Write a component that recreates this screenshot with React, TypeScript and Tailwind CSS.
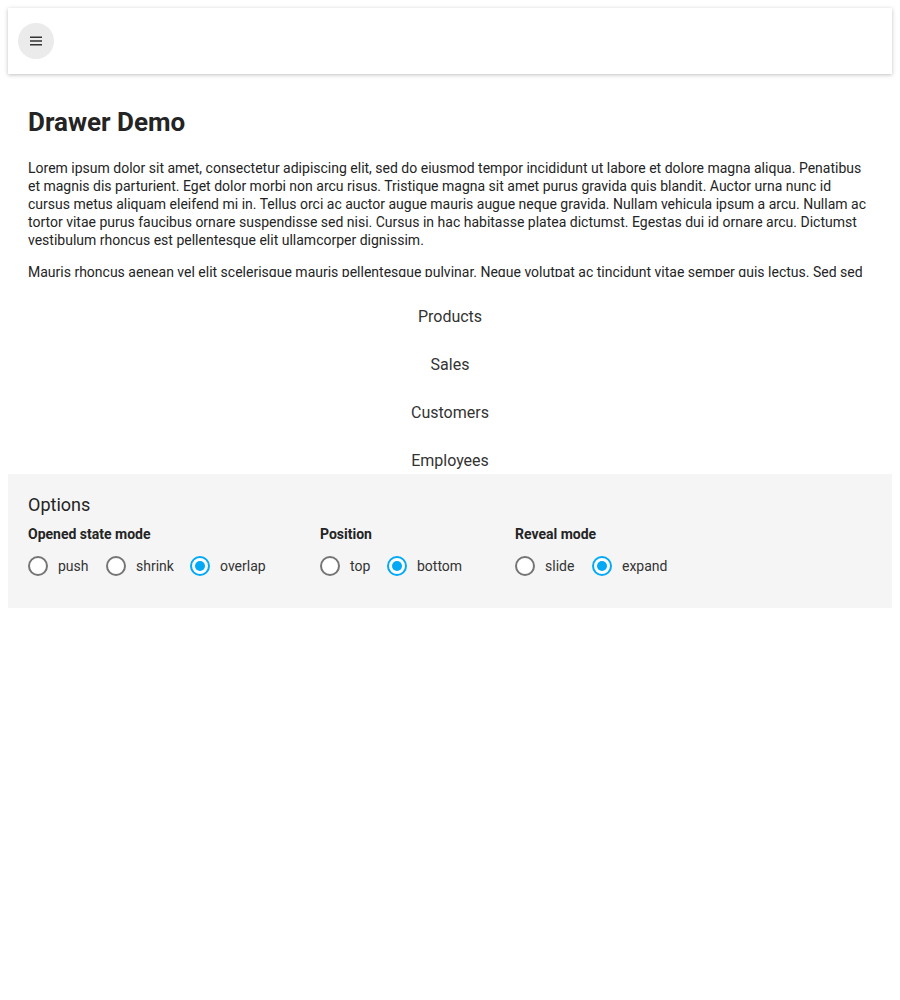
import React from "react";

function Radio({ label, checked, className = "" }: { label: string; checked?: boolean; className?: string }) {
  return (
    <div className={"flex items-center " + className}>
      <div
        className={
          "w-[20px] h-[20px] rounded-full border-2 bg-white flex items-center justify-center " +
          (checked ? "border-[#03a9f4]" : "border-[#757575]")
        }
      >
        {checked && <div className="w-[10px] h-[10px] rounded-full bg-[#03a9f4]" />}
      </div>
      <span className="ml-[10px] text-[14px] leading-[18px] text-[#333]">{label}</span>
    </div>
  );
}

export default function App() {
  return (
    <div className="m-[8px] font-['Roboto',sans-serif] text-[#333]">
      <div className="h-[66px] bg-white shadow-[0_1px_4px_rgba(0,0,0,0.25)] flex items-center px-[10px] relative z-10">
        <div className="w-[36px] h-[36px] rounded-full bg-[#ebebeb] flex items-center justify-center">
          <svg width="18" height="18" viewBox="0 0 24 24">
            <path d="M4 7h16M4 12h16M4 17h16" stroke="#333" strokeWidth="2" fill="none" />
          </svg>
        </div>
      </div>
      <div className="h-[203px] overflow-hidden px-[20px] pt-[32px]">
        <h2 className="text-[26px] leading-[32px] font-bold text-[#242424] mb-[21px]">Drawer Demo</h2>
        <p className="text-[14px] leading-[18px] text-[#242424] mb-[14px]">
          Lorem ipsum dolor sit amet, consectetur adipiscing elit, sed do eiusmod tempor incididunt ut labore et dolore magna aliqua. Penatibus et magnis dis parturient. Eget dolor morbi non arcu risus. Tristique magna sit amet purus gravida quis blandit. Auctor urna nunc id cursus metus aliquam eleifend mi in. Tellus orci ac auctor augue mauris augue neque gravida. Nullam vehicula ipsum a arcu. Nullam ac tortor vitae purus faucibus ornare suspendisse sed nisi. Cursus in hac habitasse platea dictumst. Egestas dui id ornare arcu. Dictumst vestibulum rhoncus est pellentesque elit ullamcorper dignissim.
        </p>
        <p className="text-[14px] leading-[18px] text-[#242424]">
          Mauris rhoncus aenean vel elit scelerisque mauris pellentesque pulvinar. Neque volutpat ac tincidunt vitae semper quis lectus. Sed sed risus pretium quam vulputate dignissim suspendisse in. Urna nec tincidunt praesent semper feugiat nibh sed pulvinar. Ultricies lacus sed turpis tincidunt id aliquet risus feugiat.
        </p>
      </div>
      <div className="h-[197px] overflow-hidden pt-[16px] bg-white">
        {["Products", "Sales", "Customers", "Employees"].map((t) => (
          <div key={t} className="h-[48px] flex items-center justify-center text-[16px] text-[#333]">
            {t}
          </div>
        ))}
      </div>
      <div className="h-[134px] bg-[#f5f5f5] px-[20px] pt-[20px]">
        <div className="text-[18px] leading-[22px] text-[#242424]">Options</div>
        <div className="flex mt-[9px]">
          <div className="w-[292px]">
            <div className="text-[14px] leading-[18px] font-bold text-[#242424]">Opened state mode</div>
            <div className="flex mt-[13px]">
              <Radio label="push" className="w-[78px]" />
              <Radio label="shrink" className="w-[84px]" />
              <Radio label="overlap" checked />
            </div>
          </div>
          <div className="w-[195px]">
            <div className="text-[14px] leading-[18px] font-bold text-[#242424]">Position</div>
            <div className="flex mt-[13px]">
              <Radio label="top" className="w-[67px]" />
              <Radio label="bottom" checked />
            </div>
          </div>
          <div>
            <div className="text-[14px] leading-[18px] font-bold text-[#242424]">Reveal mode</div>
            <div className="flex mt-[13px]">
              <Radio label="slide" className="w-[77px]" />
              <Radio label="expand" checked />
            </div>
          </div>
        </div>
      </div>
    </div>
  );
}
